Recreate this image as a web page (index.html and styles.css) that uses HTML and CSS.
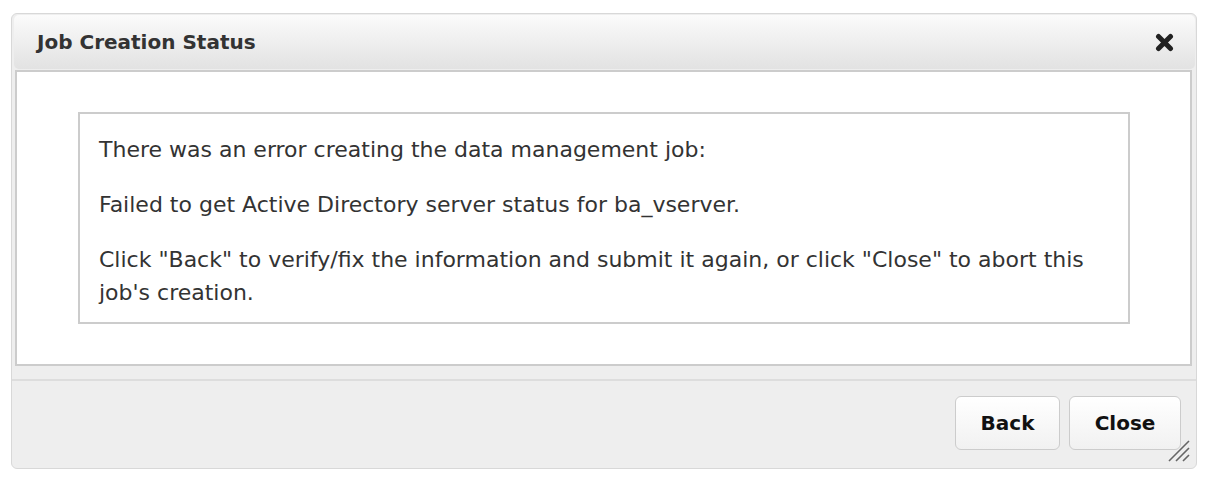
FILE: index.html
```html
<!DOCTYPE html>
<html>
<head>
<meta charset="utf-8">
<link rel="stylesheet" href="styles.css">
</head>
<body>
<div class="page">
  <div class="dialog">
    <div class="header">
      <span class="title">Job Creation Status</span>
      <svg class="close" width="19" height="19" viewBox="0 0 19 19">
        <path d="M3.5 3.5 L15.5 15.5 M15.5 3.5 L3.5 15.5" stroke="#222" stroke-width="5" stroke-linecap="round"/>
      </svg>
    </div>
    <div class="content">
      <div class="message">
        <p>There was an error creating the data management job:</p>
        <p>Failed to get Active Directory server status for ba_vserver.</p>
        <p>Click "Back" to verify/fix the information and submit it again, or click "Close" to abort this job's creation.</p>
      </div>
    </div>
    <div class="footer">
      <button class="btn btn-back">Back</button>
      <button class="btn btn-close">Close</button>
      <svg class="grip" width="23" height="23" viewBox="0 0 23 23">
        <path d="M2 22 L22 2 M9 22 L22 9 M16 22 L22 16" stroke="#666" stroke-width="1.6"/>
      </svg>
    </div>
  </div>
</div>
</body>
</html>
```
FILE: styles.css
```css
html, body {
  margin: 0;
  padding: 0;
  background: #ffffff;
}

.page {
  padding: 13px 0 0 11px;
  font-family: "DejaVu Sans", "Liberation Sans", sans-serif;
  color: #333;
}

.dialog {
  width: 1184px;
  height: 454px;
  border: 1px solid #d8d8d8;
  border-radius: 6px;
  background: #eeeeee;
  display: flex;
  flex-direction: column;
}

.header {
  margin: 1px 1px 0 2px;
  height: 54px;
  flex: none;
  border-radius: 5px;
  background: linear-gradient(#fbfbfb, #e2e2e2);
  display: flex;
  align-items: center;
  justify-content: space-between;
  padding: 0 21px 0 23px;
}

.title {
  font-weight: bold;
  font-size: 20px;
  color: #333;
  margin-top: -1px;
}

.close {
  margin-top: 1px;
}

.content {
  flex: none;
  margin: 1px 4px 0 3px;
  border: 2px solid #cccccc;
  background: #ffffff;
  padding: 40px 60px 40px 61px;
}

.message {
  border: 2px solid #cccccc;
  padding: 19px 19px 13px 19px;
  font-size: 22px;
  line-height: 33px;
}

.message p {
  margin: 0 0 22px 0;
}

.message p:last-child {
  margin-bottom: 0;
}

.footer {
  margin-top: 13px;
  border-top: 2px solid #dddddd;
  flex: 1;
  display: flex;
  justify-content: flex-end;
  align-items: flex-start;
  padding: 15px 15px 0 0;
  gap: 9px;
  position: relative;
}

.btn {
  height: 54px;
  border: 1px solid #cccccc;
  border-radius: 6px;
  background: linear-gradient(#ffffff, #f1f1f1);
  font-family: "DejaVu Sans", "Liberation Sans", sans-serif;
  font-weight: bold;
  font-size: 20px;
  color: #111;
  padding: 0;
}

.btn-back {
  width: 105px;
}

.btn-close {
  width: 112px;
}

.grip {
  position: absolute;
  right: 6px;
  bottom: 6px;
}
```
